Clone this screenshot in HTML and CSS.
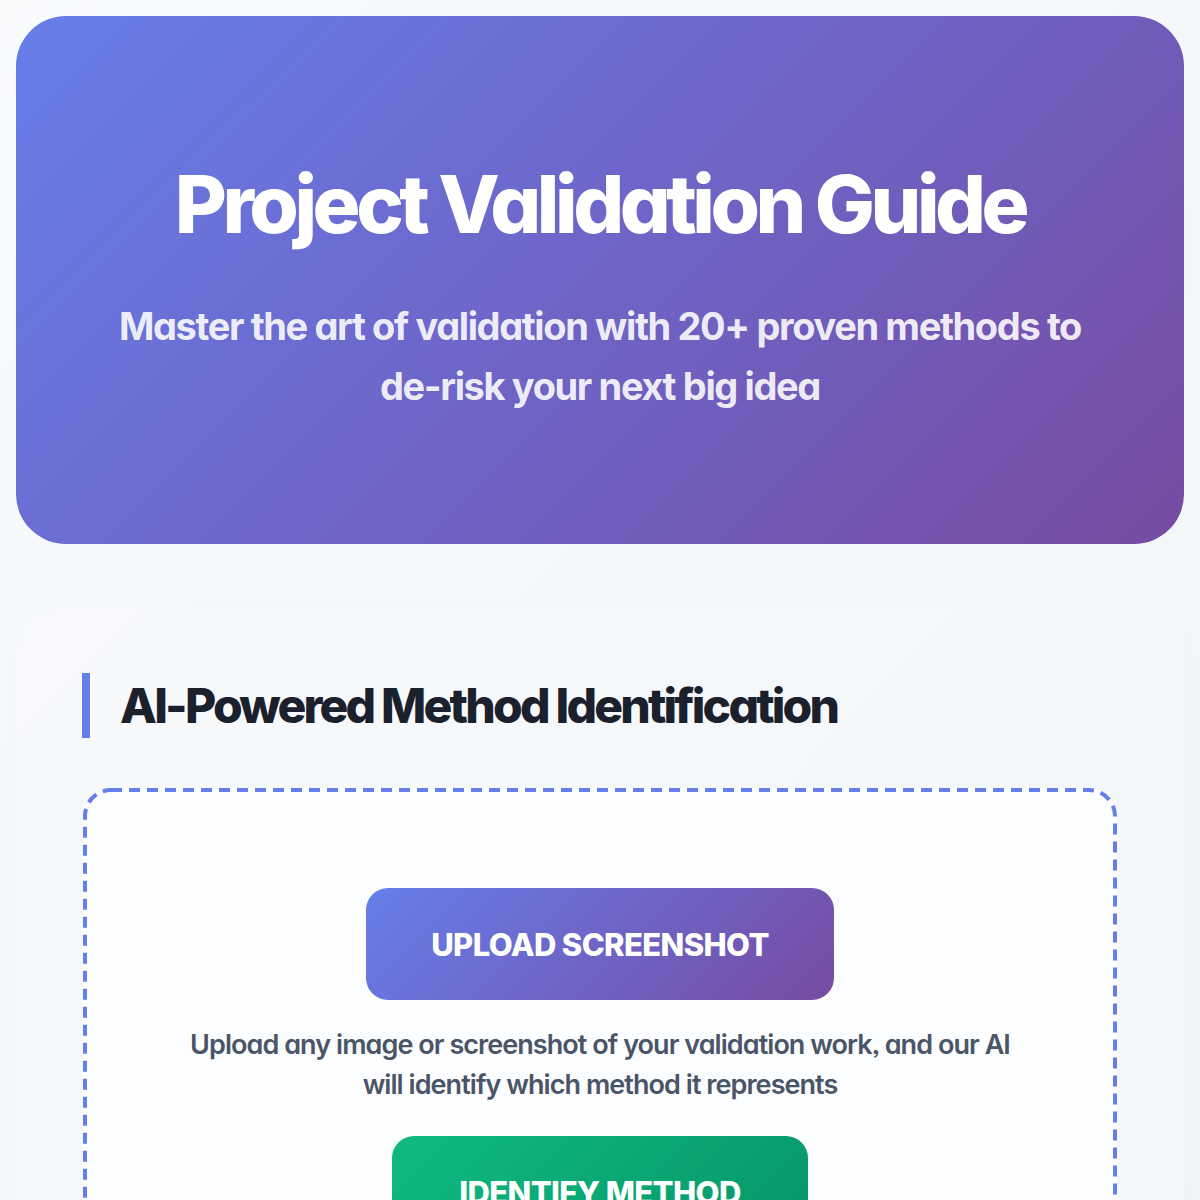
FILE: index.html
```html
<!DOCTYPE html>
<html lang="en">
<head>
<meta charset="utf-8">
<title>Project Validation Guide</title>
<link rel="stylesheet" href="styles.css">
</head>
<body>
  <div class="page">
    <header class="hero">
      <h1 class="hero-title">Project Validation Guide</h1>
      <p class="hero-sub">Master the art of validation with 20+ proven methods to <span class="nowrap">de-risk</span> your next big idea</p>
    </header>

    <section class="card">
      <h2 class="section-title">AI-Powered Method Identification</h2>
      <div class="dropzone">
        <svg class="dash" aria-hidden="true"><rect x="0" y="0" width="100%" height="100%" rx="26" ry="26"></rect></svg>
        <button class="btn btn-upload">UPLOAD SCREENSHOT</button>
        <p class="drop-text">Upload any image or screenshot of your validation work, and our AI will identify which method it represents</p>
        <button class="btn btn-identify">IDENTIFY METHOD</button>
      </div>
    </section>
  </div>
</body>
</html>
```

FILE: styles.css
```css
* { box-sizing: border-box; }

html, body {
  margin: 0;
  padding: 0;
}

body {
  background: linear-gradient(135deg, #f8fafc 0%, #f1f5f9 100%);
  font-family: "Inter", "Noto Sans", sans-serif;
  font-feature-settings: "cv11", "ss03";
  min-height: 1200px;
  overflow: hidden;
}

.page {
  padding: 16px;
}

.nowrap { white-space: nowrap; }

.hero {
  height: 528px;
  border-radius: 50px;
  background: linear-gradient(135deg, #667eea 0%, #764ba2 100%);
  color: #fff;
  display: flex;
  flex-direction: column;
  align-items: center;
  padding-top: 133px;
  text-align: center;
}

.hero-title {
  margin: 0;
  font-size: 80px;
  line-height: 110px;
  font-weight: 800;
  letter-spacing: -0.056em;
}

.hero-sub {
  margin: 37px 0 0;
  max-width: 1020px;
  font-size: 38px;
  line-height: 60px;
  font-weight: 700;
  letter-spacing: -0.036em;
  color: rgba(255, 255, 255, 0.9);
}

.card {
  margin-top: 64px;
  padding: 65px 66px 60px;
  border-radius: 40px;
  background: rgba(255, 255, 255, 0.14);
  box-shadow: 0 10px 40px rgba(15, 23, 42, 0.02);
}

.section-title {
  margin: 0;
  border-left: 8px solid #667eea;
  padding-left: 30px;
  font-size: 48px;
  line-height: 65px;
  font-weight: 800;
  letter-spacing: -0.058em;
  color: #1a202c;
}

.dropzone {
  position: relative;
  margin: 50px 1px 0;
  border-radius: 28px;
  background: #fcfdfe;
  padding: 100px 40px 80px;
  display: flex;
  flex-direction: column;
  align-items: center;
}

.dash {
  position: absolute;
  top: 2px;
  left: 2px;
  width: calc(100% - 4px);
  height: calc(100% - 4px);
  overflow: visible;
  pointer-events: none;
}

.dash rect {
  fill: none;
  stroke: #667eea;
  stroke-width: 4;
  stroke-dasharray: 11 7;
}

.btn {
  border: none;
  border-radius: 22px;
  color: #fff;
  font-family: inherit;
  font-weight: 800;
  font-size: 31px;
  letter-spacing: -0.02em;
  cursor: pointer;
}

.btn-upload {
  width: 468px;
  height: 112px;
  background: linear-gradient(135deg, #667eea 0%, #764ba2 100%);
}

.drop-text {
  margin: 25px 0 0;
  max-width: 850px;
  text-align: center;
  font-size: 27px;
  line-height: 40px;
  font-weight: 600;
  letter-spacing: -0.035em;
  color: #4a5568;
}

.btn-identify {
  margin-top: 31px;
  width: 416px;
  height: 112px;
  background: linear-gradient(135deg, #10b981 0%, #059669 100%);
}
```
